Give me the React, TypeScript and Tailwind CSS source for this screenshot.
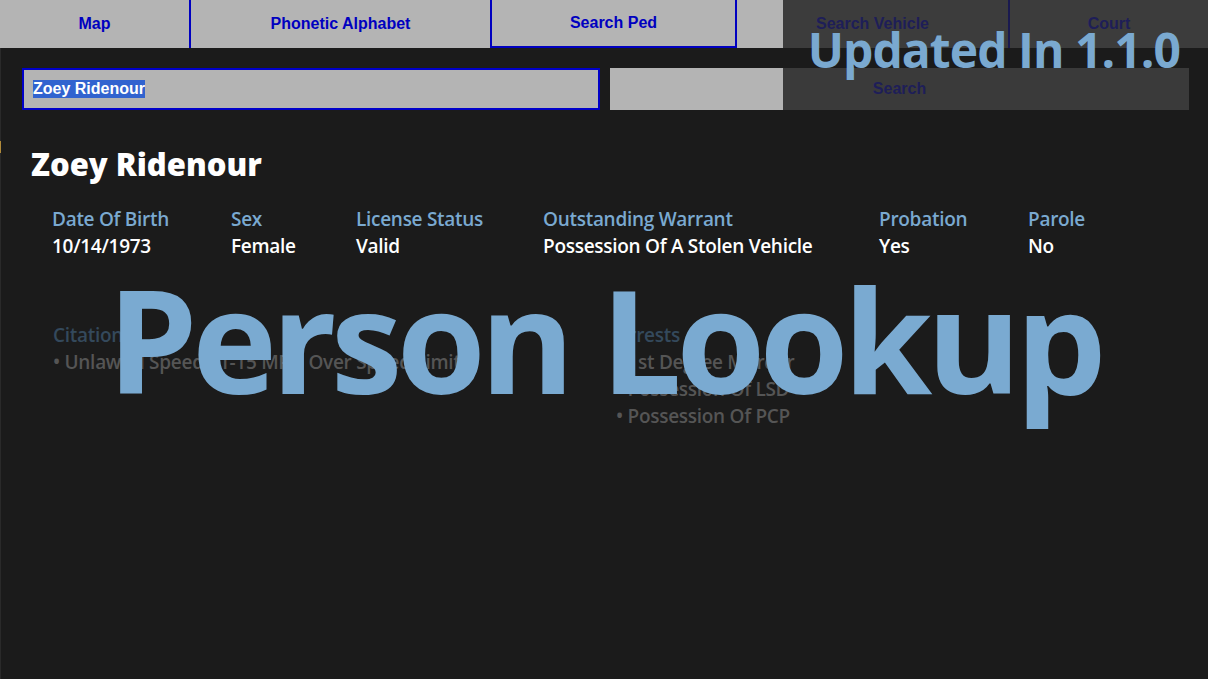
import React from "react";

const seg = { fontFamily: '"Open Sans", "Noto Sans", sans-serif' } as const;
const arial = { fontFamily: '"Liberation Sans", Arial, sans-serif' } as const;

const fields = [
  { label: "Date Of Birth", value: "10/14/1973", w: "w-[179px]" },
  { label: "Sex", value: "Female", w: "w-[125px]" },
  { label: "License Status", value: "Valid", w: "w-[187px]" },
  { label: "Outstanding Warrant", value: "Possession Of A Stolen Vehicle", w: "w-[336px]" },
  { label: "Probation", value: "Yes", w: "w-[149px]" },
  { label: "Parole", value: "No", w: "w-[120px]" },
];

export default function App() {
  return (
    <div className="relative w-[1208px] h-[679px] overflow-hidden bg-[#1b1b1b]">
      {/* tabs */}
      <nav className="flex h-[48px] text-[16px] font-bold" style={arial}>
        <div className="flex w-[191px] items-center justify-center border-r-2 border-[#0000c0] bg-[#b4b4b4] text-[#0000c0]">
          Map
        </div>
        <div className="flex w-[299px] items-center justify-center bg-[#b4b4b4] text-[#0000c0]">
          Phonetic Alphabet
        </div>
        <div className="flex w-[247px] items-center justify-center border-x-2 border-b-2 border-[#0000c0] bg-[#b4b4b4] text-[#0000c0]">
          Search Ped
        </div>
        <div className="flex w-[271px] items-center justify-center bg-[linear-gradient(to_right,#b4b4b4_46px,#3c3c3c_46px)] text-[#1e1e58]">
          Search Vehicle
        </div>
        <div className="flex flex-1 items-center justify-center border-l-2 border-[#1a1a50] bg-[#3c3c3c] text-[#1e1e58]">
          Court
        </div>
      </nav>

      {/* search row */}
      <div className="mt-[20px] flex h-[42px] gap-[10px] pl-[22px] pr-[19px]" style={arial}>
        <div className="flex w-[578px] items-center border-2 border-[#0000c8] bg-[#b4b4b4] pl-[9px] text-[16px] font-bold">
          <span className="bg-[#3163cf] leading-[18px] text-white">Zoey Ridenour</span>
        </div>
        <div className="flex flex-1 items-center justify-center bg-[linear-gradient(to_right,#b4b4b4_173px,#3a3a3a_173px)] text-[16px] font-bold text-[#1e1e58]">
          Search
        </div>
      </div>

      {/* content */}
      <div className="pl-[31px]" style={seg}>
        <h1 className="mt-[36px] text-[31px] font-extrabold leading-[36px] text-white">
          Zoey Ridenour
        </h1>
        <div className="mt-[24px] flex pl-[21px] text-[19px] font-semibold leading-[27px] tracking-[-0.015em]">
          {fields.map((f) => (
            <div key={f.label} className={f.w}>
              <div className="text-[#7aa9d0]">{f.label}</div>
              <div className="text-white">{f.value}</div>
            </div>
          ))}
        </div>

        <div className="mt-[62px] flex pl-[22px] text-[19px] font-semibold leading-[27px] tracking-[-0.015em]">
          <div className="w-[563px]">
            <div className="text-[#34495c]">Citations</div>
            <div className="text-[#555555]">• Unlawful Speed 11-15 MPH Over Speed Limit</div>
          </div>
          <div>
            <div className="text-[#34495c]">Arrests</div>
            <div className="text-[#555555]">• 1st Degree Murder</div>
            <div className="text-[#555555]">• Possession Of LSD</div>
            <div className="text-[#555555]">• Possession Of PCP</div>
          </div>
        </div>
      </div>

      {/* left edge artifact */}
      <div className="absolute left-0 top-[48px] h-[631px] w-[1px] bg-[#2a2a2a]">
        <div className="mt-[93px] h-[12px] w-[1px] bg-[#b08a3a]" />
      </div>

      {/* overlays */}
      <div
        className="pointer-events-none absolute right-[28px] top-[20px] text-[48px] font-bold leading-[60px] tracking-[-0.02em] text-[#7aa9d0]"
        style={seg}
      >
        Updated In 1.1.0
      </div>
      <div className="pointer-events-none absolute inset-0 flex items-center justify-center">
        <div
          className="mt-[-4px] text-[144px] font-bold leading-none tracking-[-0.04em] text-[#7aaad1]"
          style={seg}
        >
          Person Lookup
        </div>
      </div>
    </div>
  );
}
